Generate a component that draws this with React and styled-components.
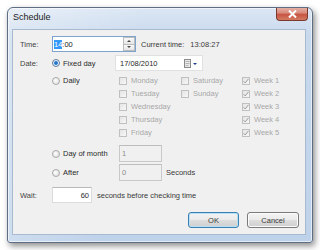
import React from 'react';
import styled, { createGlobalStyle } from 'styled-components';

const Global = createGlobalStyle`
  html, body { margin: 0; padding: 0; background: #fff; }
  body {
    width: 320px; height: 250px; overflow: hidden;
    font-family: "Liberation Sans", Arial, sans-serif;
    font-size: 7.5px; color: #222;
  }
`;

const Window = styled.div`
  margin: 7px 0 0 7px;
  width: 306px;
  height: 236px;
  box-sizing: border-box;
  border: 1px solid #5d6d82;
  border-radius: 6px 6px 3px 3px;
  background: linear-gradient(100deg, rgba(255, 255, 255, 0.35) 0%, rgba(255, 255, 255, 0) 40%),
    linear-gradient(to bottom, #dce7f4 0%, #c8d9ed 12%, #bed2ea 100%);
  box-shadow: 2px 3px 6px rgba(0, 0, 0, 0.45), inset 0 0 0 1px rgba(255, 255, 255, 0.55);
  display: flex;
  flex-direction: column;
`;

const TitleBar = styled.div`
  height: 21px;
  display: flex;
  justify-content: space-between;
  align-items: flex-start;
  padding: 0 4px 0 5px;
`;

const Title = styled.span`
  font-size: 9px;
  color: #1b1b1b;
  margin-top: 4px;
`;

const CloseButton = styled.div`
  width: 32px;
  height: 13px;
  box-sizing: border-box;
  border: 1px solid #7a3a30;
  border-top: none;
  border-radius: 0 0 4px 4px;
  background: linear-gradient(#e6b0a4 0%, #d88b7c 40%, #c75644 55%, #d37a62 100%);
  display: flex;
  align-items: center;
  justify-content: center;
`;

const Client = styled.div`
  flex: 1;
  margin: 0 6px 7px 4px;
  background: #f0f0f0;
  border: 1px solid #a8bad0;
  padding: 6px 6px 0 7px;
  display: flex;
  flex-direction: column;
`;

const Row = styled.div`
  display: flex;
  align-items: ${p => p.$top ? 'flex-start' : 'center'};
  height: ${p => p.$h || 16}px;
  margin-top: ${p => p.$mt || 0}px;
  justify-content: ${p => p.$end ? 'flex-end' : 'flex-start'};
  gap: ${p => p.$gap || 0}px;
`;

const Label = styled.span`
  width: 32px;
  flex: none;
  color: #444;
`;

const TimeBox = styled.div`
  width: 84px;
  height: 16px;
  box-sizing: border-box;
  border: 1px solid #7fa3cf;
  background: #fff;
  display: flex;
  align-items: center;
  justify-content: space-between;
  padding-left: 1px;
`;

const Selected = styled.span`
  background: #3399ff;
  color: #fff;
`;

const Spinner = styled.div`
  width: 12px;
  height: 14px;
  display: flex;
  flex-direction: column;
`;

const SpinPart = styled.div`
  flex: 1;
  box-sizing: border-box;
  border: 1px solid #bcbcbc;
  border-top: ${p => p.$down ? 'none' : '1px solid #bcbcbc'};
  background: linear-gradient(#f9f9f9, #e6e6e6);
  display: flex;
  align-items: center;
  justify-content: center;
`;

const Info = styled.span`
  margin-left: ${p => p.$ml || 0}px;
  color: #3a3a3a;
  white-space: nowrap;
`;

const RadioOption = styled.div`
  width: 63px;
  flex: none;
  height: ${p => p.$h || 16}px;
  display: flex;
  align-items: center;
  gap: 3px;
  color: #2a2a2a;
  white-space: nowrap;
`;

const Radio = styled.span`
  width: 8px;
  height: 8px;
  border-radius: 50%;
  box-sizing: border-box;
  border: 1px solid ${p => p.$on ? '#5f7d99' : '#a9a9a9'};
  background: ${p => p.$on
    ? 'radial-gradient(circle, #1d5fa8 0%, #3d8ee0 40%, #eaf2fb 55%, #e4e9ee 100%)'
    : 'radial-gradient(circle at 40% 40%, #fdfdfd, #dcdcdc)'};
  flex: none;
`;

const DateCombo = styled.div`
  width: 88px;
  height: 16px;
  box-sizing: border-box;
  border: 1px solid #e1e1e1;
  background: #fff;
  display: flex;
  align-items: center;
  justify-content: space-between;
  padding: 0 5px 0 4px;
  color: #2a2a2a;
`;

const Checks = styled.div`
  display: flex;
  margin-left: 4px;
`;

const CheckColumn = styled.div`
  width: ${p => p.$w ? p.$w + 'px' : 'auto'};
  display: flex;
  flex-direction: column;
`;

const CheckItem = styled.div`
  height: 13px;
  display: flex;
  align-items: center;
  gap: 4px;
  color: #a8a8a8;
  white-space: nowrap;
`;

const Box = styled.span`
  width: 8px;
  height: 8px;
  box-sizing: border-box;
  border: 1px solid #c0c0c0;
  background: linear-gradient(135deg, #e4e4e4, #f7f7f7);
  display: flex;
  align-items: center;
  justify-content: center;
  flex: none;
`;

const Field = styled.div`
  width: ${p => p.$w}px;
  height: ${p => p.$h || 17}px;
  box-sizing: border-box;
  margin-left: ${p => p.$ml || 0}px;
  border: 1px solid ${p => p.$disabled ? '#c9c9c9' : '#dcdcdc'};
  border-top-color: ${p => p.$disabled ? '#bdbdbd' : '#b9b9b9'};
  background: ${p => p.$disabled ? '#f0f0f0' : '#fff'};
  color: ${p => p.$disabled ? '#8c8c8c' : '#2a2a2a'};
  display: flex;
  align-items: center;
  justify-content: ${p => p.$right ? 'flex-end' : 'flex-start'};
  padding: 0 2px;
`;

const Button = styled.div`
  width: ${p => p.$w}px;
  height: 16px;
  box-sizing: border-box;
  border: 1px solid ${p => p.$default ? '#3c7fb1' : '#7a7a7a'};
  border-radius: 3px;
  background: linear-gradient(#f3f3f3 0%, #ebebeb 48%, #dddddd 52%, #cfcfcf 100%);
  box-shadow: inset 0 0 0 1px ${p => p.$default ? '#b8e0f4' : '#fbfbfb'};
  display: flex;
  align-items: center;
  justify-content: center;
  color: #3a3a3a;
`;

const Check = () => (
  <svg width="6" height="6" viewBox="0 0 6 6">
    <path d="M0.5 3.2 L2.2 4.9 L5.5 0.8" fill="none" stroke="#9a9a9a" strokeWidth="1" />
  </svg>
);

const CheckBox = ({ label, checked }) => (
  <CheckItem>
    <Box>{checked && <Check />}</Box>
    {label}
  </CheckItem>
);

const Arrow = ({ up }) => (
  <svg width="4" height="2" viewBox="0 0 4 2">
    <path d={up ? 'M0 2 L2 0 L4 2 Z' : 'M0 0 L2 2 L4 0 Z'} fill="#4a4a4a" />
  </svg>
);

const CalendarIcon = () => (
  <svg width="13" height="9" viewBox="0 0 13 9">
    <rect x="0.5" y="0.5" width="6" height="8" fill="#e9e9e9" stroke="#8a8a8a" />
    <path d="M1.5 2.5 H5.5 M1.5 4.5 H5.5 M1.5 6.5 H4.5" stroke="#b5b5b5" />
    <path d="M9 4 L13 4 L11 6 Z" fill="#1f3e86" />
  </svg>
);

const CloseX = () => (
  <svg width="9" height="8" viewBox="0 0 9 8">
    <path d="M1 0.5 L8 7.5 M8 0.5 L1 7.5" stroke="#fff" strokeWidth="2" />
  </svg>
);

export default function App() {
  return (
    <>
      <Global />
      <Window>
        <TitleBar>
          <Title>Schedule</Title>
          <CloseButton><CloseX /></CloseButton>
        </TitleBar>
        <Client>
          <Row>
            <Label>Time:</Label>
            <TimeBox>
              <span><Selected>14</Selected>:00</span>
              <Spinner>
                <SpinPart><Arrow up /></SpinPart>
                <SpinPart $down><Arrow /></SpinPart>
              </Spinner>
            </TimeBox>
            <Info $ml={5}>Current time:</Info>
            <Info $ml={6}>13:08:27</Info>
          </Row>

          <Row $mt={3}>
            <Label>Date:</Label>
            <RadioOption><Radio $on />Fixed day</RadioOption>
            <DateCombo>
              <span>17/08/2010</span>
              <CalendarIcon />
            </DateCombo>
          </Row>

          <Row $mt={3} $h={65} $top>
            <Label />
            <RadioOption $h={13}><Radio />Daily</RadioOption>
            <Checks>
              <CheckColumn $w={62}>
                <CheckBox label="Monday" />
                <CheckBox label="Tuesday" />
                <CheckBox label="Wednesday" />
                <CheckBox label="Thursday" />
                <CheckBox label="Friday" />
              </CheckColumn>
              <CheckColumn $w={61}>
                <CheckBox label="Saturday" />
                <CheckBox label="Sunday" />
              </CheckColumn>
              <CheckColumn>
                <CheckBox label="Week 1" checked />
                <CheckBox label="Week 2" checked />
                <CheckBox label="Week 3" checked />
                <CheckBox label="Week 4" checked />
                <CheckBox label="Week 5" checked />
              </CheckColumn>
            </Checks>
          </Row>

          <Row $mt={6} $h={17}>
            <Label />
            <RadioOption><Radio />Day of month</RadioOption>
            <Field $w={43} $ml={4} $disabled>1</Field>
          </Row>

          <Row $mt={2} $h={17}>
            <Label />
            <RadioOption><Radio />After</RadioOption>
            <Field $w={43} $ml={4} $disabled>0</Field>
            <Info $ml={4}>Seconds</Info>
          </Row>

          <Row $mt={6}>
            <Label>Wait:</Label>
            <Field $w={40} $h={16} $right>60</Field>
            <Info $ml={5}>seconds before checking time</Info>
          </Row>

          <Row $mt={9} $end $gap={8}>
            <Button $w={51} $default>OK</Button>
            <Button $w={52}>Cancel</Button>
          </Row>
        </Client>
      </Window>
    </>
  );
}
